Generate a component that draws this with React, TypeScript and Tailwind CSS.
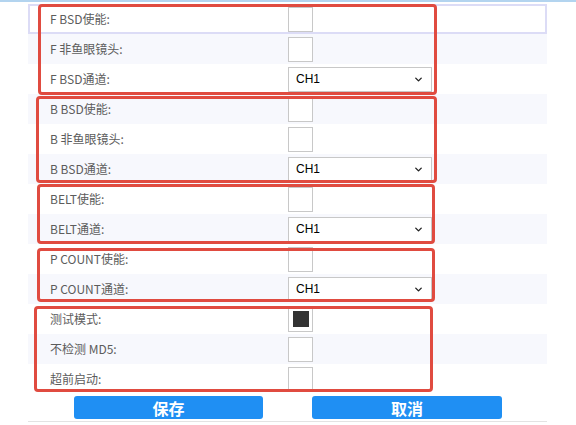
import { ChevronDown } from 'lucide-react';

type Row = { label: string; kind: 'check' | 'select'; checked?: boolean };

const rows: Row[] = [
  { label: 'F BSD使能:', kind: 'check' },
  { label: 'F 非鱼眼镜头:', kind: 'check' },
  { label: 'F BSD通道:', kind: 'select' },
  { label: 'B BSD使能:', kind: 'check' },
  { label: 'B 非鱼眼镜头:', kind: 'check' },
  { label: 'B BSD通道:', kind: 'select' },
  { label: 'BELT使能:', kind: 'check' },
  { label: 'BELT通道:', kind: 'select' },
  { label: 'P COUNT使能:', kind: 'check' },
  { label: 'P COUNT通道:', kind: 'select' },
  { label: '测试模式:', kind: 'check', checked: true },
  { label: '不检测 MD5:', kind: 'check' },
  { label: '超前启动:', kind: 'check' },
];

// annotation boxes drawn over the form
const marks = [
  'left-[38px] top-[4px] w-[399px] h-[91px]',
  'left-[36px] top-[96px] w-[401px] h-[87px]',
  'left-[37px] top-[184px] w-[398px] h-[60px]',
  'left-[37px] top-[248px] w-[398px] h-[54px]',
  'left-[34px] top-[306px] w-[399px] h-[86px]',
];

function Check({ checked }: { checked?: boolean }) {
  return (
    <div className="w-[25px] h-[25px] border border-[#c8c8c8] bg-white flex items-center justify-center">
      {checked && <div className="w-[16px] h-[16px] bg-[#333]" />}
    </div>
  );
}

function Select() {
  return (
    <div className="w-[144px] h-[25px] border border-[#c8c8c8] bg-white flex items-center justify-between pl-[7px] pr-[7px] font-['Liberation_Sans',sans-serif] text-[12px] text-black">
      <span>CH1</span>
      <ChevronDown size={11} strokeWidth={3} className="text-[#222]" />
    </div>
  );
}

export default function App() {
  return (
    <div className="relative w-[576px] h-[425px] bg-white overflow-hidden font-['Noto_Sans_CJK_SC','Liberation_Sans',sans-serif]">
      <div className="h-[2px] bg-[#b3d4ef]" />
      <div className="ml-[28px] w-[519px] pt-[2px]">
        {rows.map((r, i) => (
          <div
            key={r.label}
            className={
              'h-[30px] flex items-center ' +
              (i === 0 ? 'border-2 border-[#dcdcf6] bg-white ' : i % 2 === 1 ? 'bg-[#f7f8fd] ' : 'bg-white ')
            }
          >
            <div className={(i === 0 ? 'w-[258px] pl-[20px] ' : 'w-[260px] pl-[22px] ') + 'text-[12px] text-[#5c5c5c]'}>
              {r.label}
            </div>
            {r.kind === 'check' ? <Check checked={r.checked} /> : <Select />}
          </div>
        ))}
        <div className="h-[28px] flex items-start pt-[2px] border-b border-[#e3e3e3]">
          <button className="ml-[46px] w-[189px] h-[23px] rounded-[3px] bg-[#1f8ff3] text-white text-[16px] font-bold leading-none">
            保存
          </button>
          <button className="ml-[49px] w-[190px] h-[23px] rounded-[3px] bg-[#1f8ff3] text-white text-[16px] font-bold leading-none">
            取消
          </button>
        </div>
      </div>
      {marks.map((m) => (
        <div key={m} className={'absolute border-[3px] border-[#e04b40] rounded-[4px] pointer-events-none ' + m} />
      ))}
    </div>
  );
}
